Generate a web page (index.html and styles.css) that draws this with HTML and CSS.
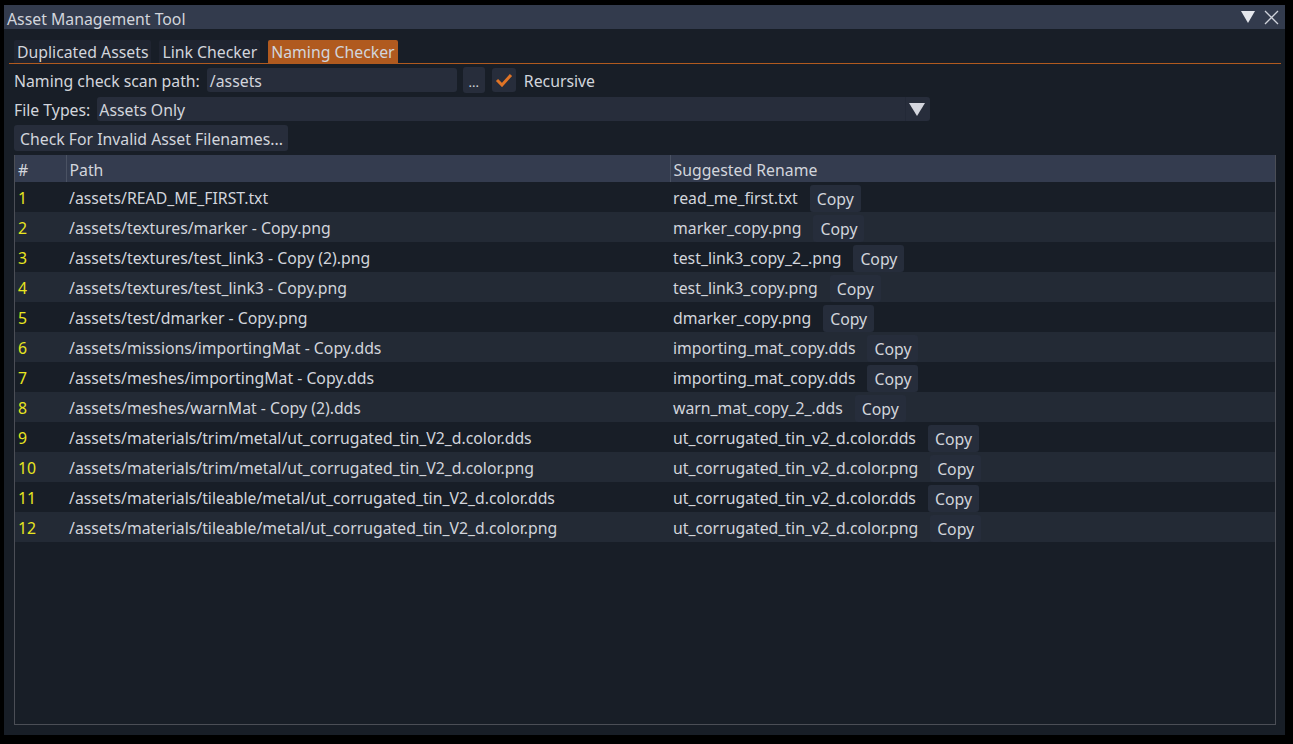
FILE: index.html
```html
<!DOCTYPE html>
<html lang="en">
<head>
  <meta charset="UTF-8">
  <title>Asset Management Tool</title>
  <link rel="stylesheet" href="styles.css">
</head>
<body>
  <div class="window">
    <!-- Title Bar -->
    <div class="titlebar">
      <span>Asset Management Tool</span>
      <div class="title-icons">
        <svg width="16" height="14" viewBox="0 0 16 14"><polygon points="1,1 15,1 8,13" fill="#e4e6ec"/></svg>
        <svg width="15" height="15" viewBox="0 0 15 15"><path d="M1 1 L14 14 M14 1 L1 14" stroke="#cfd2da" stroke-width="1.3" fill="none"/></svg>
      </div>
    </div>

    <div class="content">
      <!-- Tabs -->
      <div class="tabs">
        <div class="tab">Duplicated Assets</div>
        <div class="tab">Link Checker</div>
        <div class="tab active">Naming Checker</div>
      </div>

      <div class="panel">
        <div class="form-row">
          <label>Naming check scan path:</label>
          <div class="input path-input">/assets</div>
          <div class="small-btn">...</div>
          <div class="checkbox">
            <svg width="18" height="14" viewBox="0 0 18 14"><path d="M2 7 L7 12 L16 2" stroke="#e07426" stroke-width="3" fill="none"/></svg>
          </div>
          <span class="check-label">Recursive</span>
        </div>

        <div class="form-row">
          <label>File Types:</label>
          <div class="combo">
            <div class="combo-value">Assets Only</div>
            <div class="combo-arrow">
              <svg width="16" height="14" viewBox="0 0 16 14"><polygon points="0,1 16,1 8,14" fill="#d4d6de"/></svg>
            </div>
          </div>
        </div>

        <div class="form-row">
          <div class="button">Check For Invalid Asset Filenames...</div>
        </div>

        <!-- Results Table -->
        <div class="results">
          <table>
            <colgroup>
              <col class="col-num">
              <col class="col-path">
              <col>
            </colgroup>
            <thead>
              <tr><th>#</th><th>Path</th><th>Suggested Rename</th></tr>
            </thead>
            <tbody>
              <tr><td class="num">1</td><td>/assets/READ_ME_FIRST.txt</td><td><div class="rename"><span>read_me_first.txt</span><span class="copy">Copy</span></div></td></tr>
              <tr><td class="num">2</td><td>/assets/textures/marker - Copy.png</td><td><div class="rename"><span>marker_copy.png</span><span class="copy">Copy</span></div></td></tr>
              <tr><td class="num">3</td><td>/assets/textures/test_link3 - Copy (2).png</td><td><div class="rename"><span>test_link3_copy_2_.png</span><span class="copy">Copy</span></div></td></tr>
              <tr><td class="num">4</td><td>/assets/textures/test_link3 - Copy.png</td><td><div class="rename"><span>test_link3_copy.png</span><span class="copy">Copy</span></div></td></tr>
              <tr><td class="num">5</td><td>/assets/test/dmarker - Copy.png</td><td><div class="rename"><span>dmarker_copy.png</span><span class="copy">Copy</span></div></td></tr>
              <tr><td class="num">6</td><td>/assets/missions/importingMat - Copy.dds</td><td><div class="rename"><span>importing_mat_copy.dds</span><span class="copy">Copy</span></div></td></tr>
              <tr><td class="num">7</td><td>/assets/meshes/importingMat - Copy.dds</td><td><div class="rename"><span>importing_mat_copy.dds</span><span class="copy">Copy</span></div></td></tr>
              <tr><td class="num">8</td><td>/assets/meshes/warnMat - Copy (2).dds</td><td><div class="rename"><span>warn_mat_copy_2_.dds</span><span class="copy">Copy</span></div></td></tr>
              <tr><td class="num">9</td><td>/assets/materials/trim/metal/ut_corrugated_tin_V2_d.color.dds</td><td><div class="rename"><span>ut_corrugated_tin_v2_d.color.dds</span><span class="copy">Copy</span></div></td></tr>
              <tr><td class="num">10</td><td>/assets/materials/trim/metal/ut_corrugated_tin_V2_d.color.png</td><td><div class="rename"><span>ut_corrugated_tin_v2_d.color.png</span><span class="copy">Copy</span></div></td></tr>
              <tr><td class="num">11</td><td>/assets/materials/tileable/metal/ut_corrugated_tin_V2_d.color.dds</td><td><div class="rename"><span>ut_corrugated_tin_v2_d.color.dds</span><span class="copy">Copy</span></div></td></tr>
              <tr><td class="num">12</td><td>/assets/materials/tileable/metal/ut_corrugated_tin_V2_d.color.png</td><td><div class="rename"><span>ut_corrugated_tin_v2_d.color.png</span><span class="copy">Copy</span></div></td></tr>
            </tbody>
          </table>
        </div>
      </div>
    </div>
  </div>
</body>
</html>
```

FILE: styles.css
```css
/* Reset */
* {
  margin: 0;
  padding: 0;
  box-sizing: border-box;
}

:root {
  --window-bg: #181e27;
  --title-bg: #333b4d;
  --frame-bg: #272d3b;
  --row-alt: #232a35;
  --text: #d2d5dc;
  --accent: #b05a1f;
  --number: #e8e620;
}

body {
  background-color: #000;
  color: var(--text);
  font-family: "Noto Sans", "Open Sans", sans-serif;
  font-size: 15.8px;
  line-height: 1.2;
}

.window {
  margin: 5px 0 0 4px;
  width: 1281px;
  height: 730px;
  background-color: var(--window-bg);
  display: flex;
  flex-direction: column;
}

/* Title Bar */
.titlebar {
  height: 24px;
  background-color: var(--title-bg);
  display: flex;
  align-items: center;
  justify-content: space-between;
  padding: 0 6px 0 3px;
}

.titlebar span {
  padding-top: 5px;
}

.title-icons {
  display: flex;
  align-items: center;
  gap: 8px;
}

.content {
  flex: 1;
  display: flex;
  flex-direction: column;
  padding: 11px 4px 0 5px;
}

/* Tabs */
.tabs {
  display: flex;
  gap: 8px;
  padding-left: 5px;
  border-bottom: 1px solid var(--accent);
}

.tab {
  background-color: #1f2430;
  padding: 3px 3px 0 3px;
  height: 23px;
  border-radius: 2px 2px 0 0;
}

.tab.active {
  background-color: var(--accent);
}

.panel {
  flex: 1;
  display: flex;
  flex-direction: column;
  gap: 4px;
  padding: 3px 5px 10px 5px;
}

/* Form rows */
.form-row {
  display: flex;
  align-items: center;
  gap: 6px;
}

.form-row label,
.check-label {
  padding-top: 3px;
}

.input {
  background-color: var(--frame-bg);
  border-radius: 3px;
  height: 24px;
  padding: 4px 3px 0 3px;
}

.path-input {
  width: 250px;
  margin-left: 1px;
}

.small-btn {
  background-color: var(--frame-bg);
  border-radius: 3px;
  width: 22px;
  height: 26px;
  text-align: center;
  font-size: 13px;
  padding-top: 8px;
}

.checkbox {
  background-color: var(--frame-bg);
  border-radius: 3px;
  width: 24px;
  height: 24px;
  display: flex;
  align-items: center;
  justify-content: center;
  margin-left: 1px;
}

.check-label {
  margin-left: 2px;
}

.combo {
  display: flex;
  width: 833px;
  height: 24px;
  background-color: var(--frame-bg);
  border-radius: 3px;
  margin-left: 1px;
}

.combo-value {
  flex: 1;
  padding: 4px 2px 0 2px;
}

.combo-arrow {
  width: 25px;
  border-left: 1px solid #232937;
  display: flex;
  align-items: center;
  justify-content: center;
  padding-right: 2px;
}

.button {
  background-color: var(--frame-bg);
  border-radius: 3px;
  height: 26px;
  padding: 5px 5px 0 6px;
}

/* Results Table */
.results {
  flex: 1;
  border: 1px solid #4b4e56;
  border-top: none;
}

table {
  width: 100%;
  border-collapse: collapse;
  table-layout: fixed;
}

.col-num {
  width: 51px;
}

.col-path {
  width: 604px;
}

th {
  background-color: #343c4f;
  font-weight: normal;
  text-align: left;
  height: 27px;
  padding: 4px 3px 0 3px;
  border-left: 1px solid #4a5263;
}

th:first-child {
  border-left: none;
}

td {
  height: 30px;
  padding: 2px 3px 0 3px;
  white-space: nowrap;
}

tbody tr:nth-child(even) td {
  background-color: var(--row-alt);
}

td.num {
  color: var(--number);
}

.rename {
  display: flex;
  align-items: center;
  gap: 12px;
}

.copy {
  background-color: #262d3b;
  border-radius: 3px;
  height: 27px;
  padding: 5px 7px 0 7px;
}
```
